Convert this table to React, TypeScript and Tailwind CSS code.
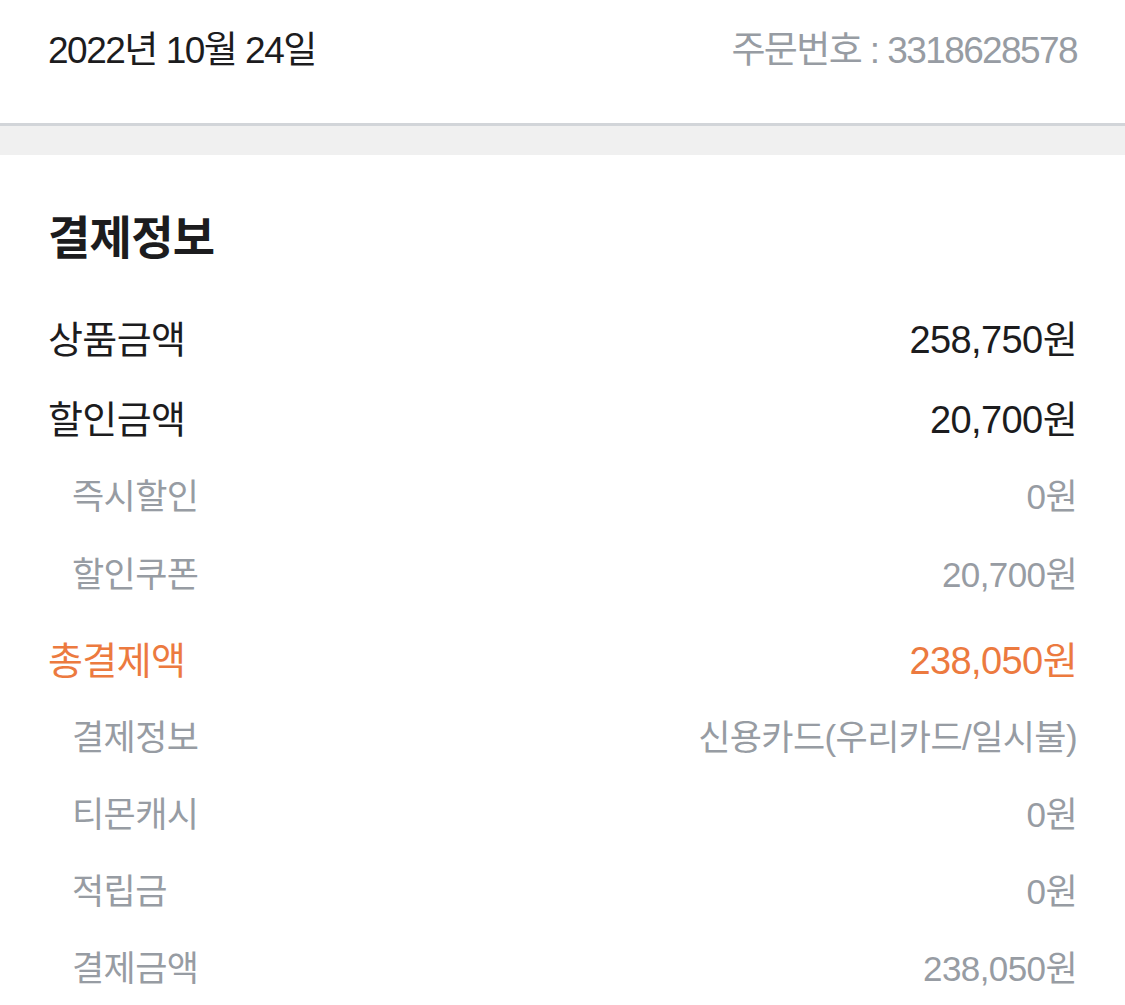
const font = "font-['Liberation_Sans','Noto_Sans_CJK_KR',sans-serif]";

type Row = { label: string; value: string; kind: "main" | "sub" | "total"; extra?: string };

const rows: Row[] = [
  { label: "상품금액", value: "258,750원", kind: "main" },
  { label: "할인금액", value: "20,700원", kind: "main", extra: "mt-[3px]" },
  { label: "즉시할인", value: "0원", kind: "sub" },
  { label: "할인쿠폰", value: "20,700원", kind: "sub", extra: "mt-[1px]" },
  { label: "총결제액", value: "238,050원", kind: "total", extra: "mt-[9px]" },
  { label: "결제정보", value: "신용카드(우리카드/일시불)", kind: "sub" },
  { label: "티몬캐시", value: "0원", kind: "sub" },
  { label: "적립금", value: "0원", kind: "sub" },
  { label: "결제금액", value: "238,050원", kind: "sub" },
];

function PayRow({ row }: { row: Row }) {
  const color =
    row.kind === "total" ? "text-[#ec7a3f]" : row.kind === "sub" ? "text-[#979ca3]" : "text-[#1c1c1e]";
  // sub rows are indented and a touch smaller
  const size = row.kind === "sub" ? "text-[35px]" : "text-[38px]";
  return (
    <div className={`flex h-[77px] items-center justify-between ${color} ${row.extra ?? ""}`}>
      <span className={`${size} leading-none tracking-[-0.6px] ${row.kind === "sub" ? "pl-[24px]" : ""}`}>
        {row.label}
      </span>
      <span className={`${size} leading-none tracking-[-0.6px]`}>{row.value}</span>
    </div>
  );
}

export default function App() {
  return (
    <div className={`w-[1125px] h-[1005px] overflow-hidden bg-white ${font}`}>
      <header className="flex h-[123px] items-center justify-between px-[48px] pb-[22px]">
        <span className="text-[37px] tracking-[-1.5px] text-[#1c1c1e]">2022년 10월 24일</span>
        <span className="text-[37px] tracking-[-1.6px] text-[#979ca3]">주문번호 : 3318628578</span>
      </header>
      <div className="h-[32px] border-t-[3px] border-[#d2d5d9] bg-[#f0f0f0]" />
      <section className="px-[48px] pt-[60px]">
        <h2 className="text-[46px] font-bold leading-none tracking-[-0.75px] text-[#1c1c1e]">결제정보</h2>
        <div className="mt-[40px] flex flex-col">
          {rows.map((r) => (
            <PayRow key={r.label + r.value} row={r} />
          ))}
        </div>
      </section>
    </div>
  );
}
